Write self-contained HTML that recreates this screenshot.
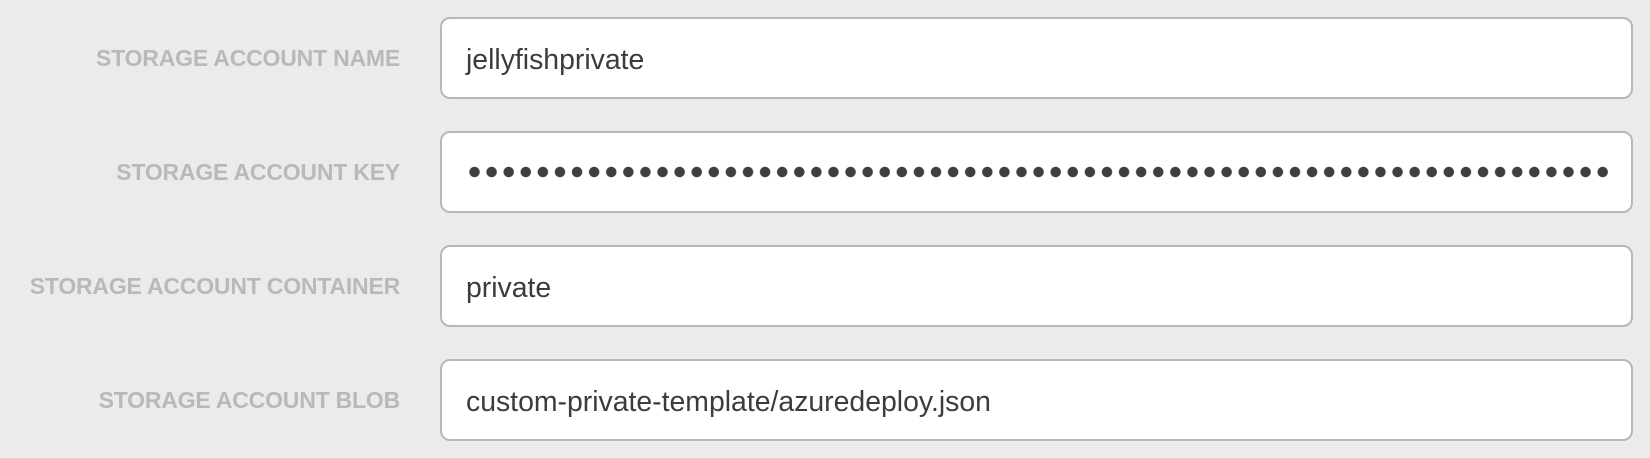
<!DOCTYPE html>
<html><head><style>
body{margin:0;width:1650px;height:458px;background:#ebebeb;font-family:"Liberation Sans",sans-serif;position:relative;overflow:hidden}
.l{position:absolute;right:1250px;height:82px;line-height:82px;font-weight:bold;font-size:23px;color:#b9b9b9;white-space:nowrap;letter-spacing:-0.2px}
.i{position:absolute;left:440px;width:1189px;height:78px;background:#fff;border:2px solid #b8b8b8;border-radius:10px}
.t{position:absolute;left:24px;top:2px;line-height:78px;font-size:28.4px;color:#3c3c3c}
.d{position:absolute;left:26px;top:33px;width:1144px;height:12px;background:radial-gradient(circle at 6.5px 6px,#3f3f3f 4.9px,transparent 5.5px) 0 0/17.1px 12px repeat-x}
</style></head><body>
<div class="l" style="top:17px">STORAGE ACCOUNT NAME</div>
<div class="i" style="top:17px"><div class="t">jellyfishprivate</div></div>
<div class="l" style="top:131px">STORAGE ACCOUNT KEY</div>
<div class="i" style="top:131px"><div class="d"></div></div>
<div class="l" style="top:245px">STORAGE ACCOUNT CONTAINER</div>
<div class="i" style="top:245px"><div class="t">private</div></div>
<div class="l" style="top:359px">STORAGE ACCOUNT BLOB</div>
<div class="i" style="top:359px"><div class="t">custom-private-template/azuredeploy.json</div></div>
</body></html>
